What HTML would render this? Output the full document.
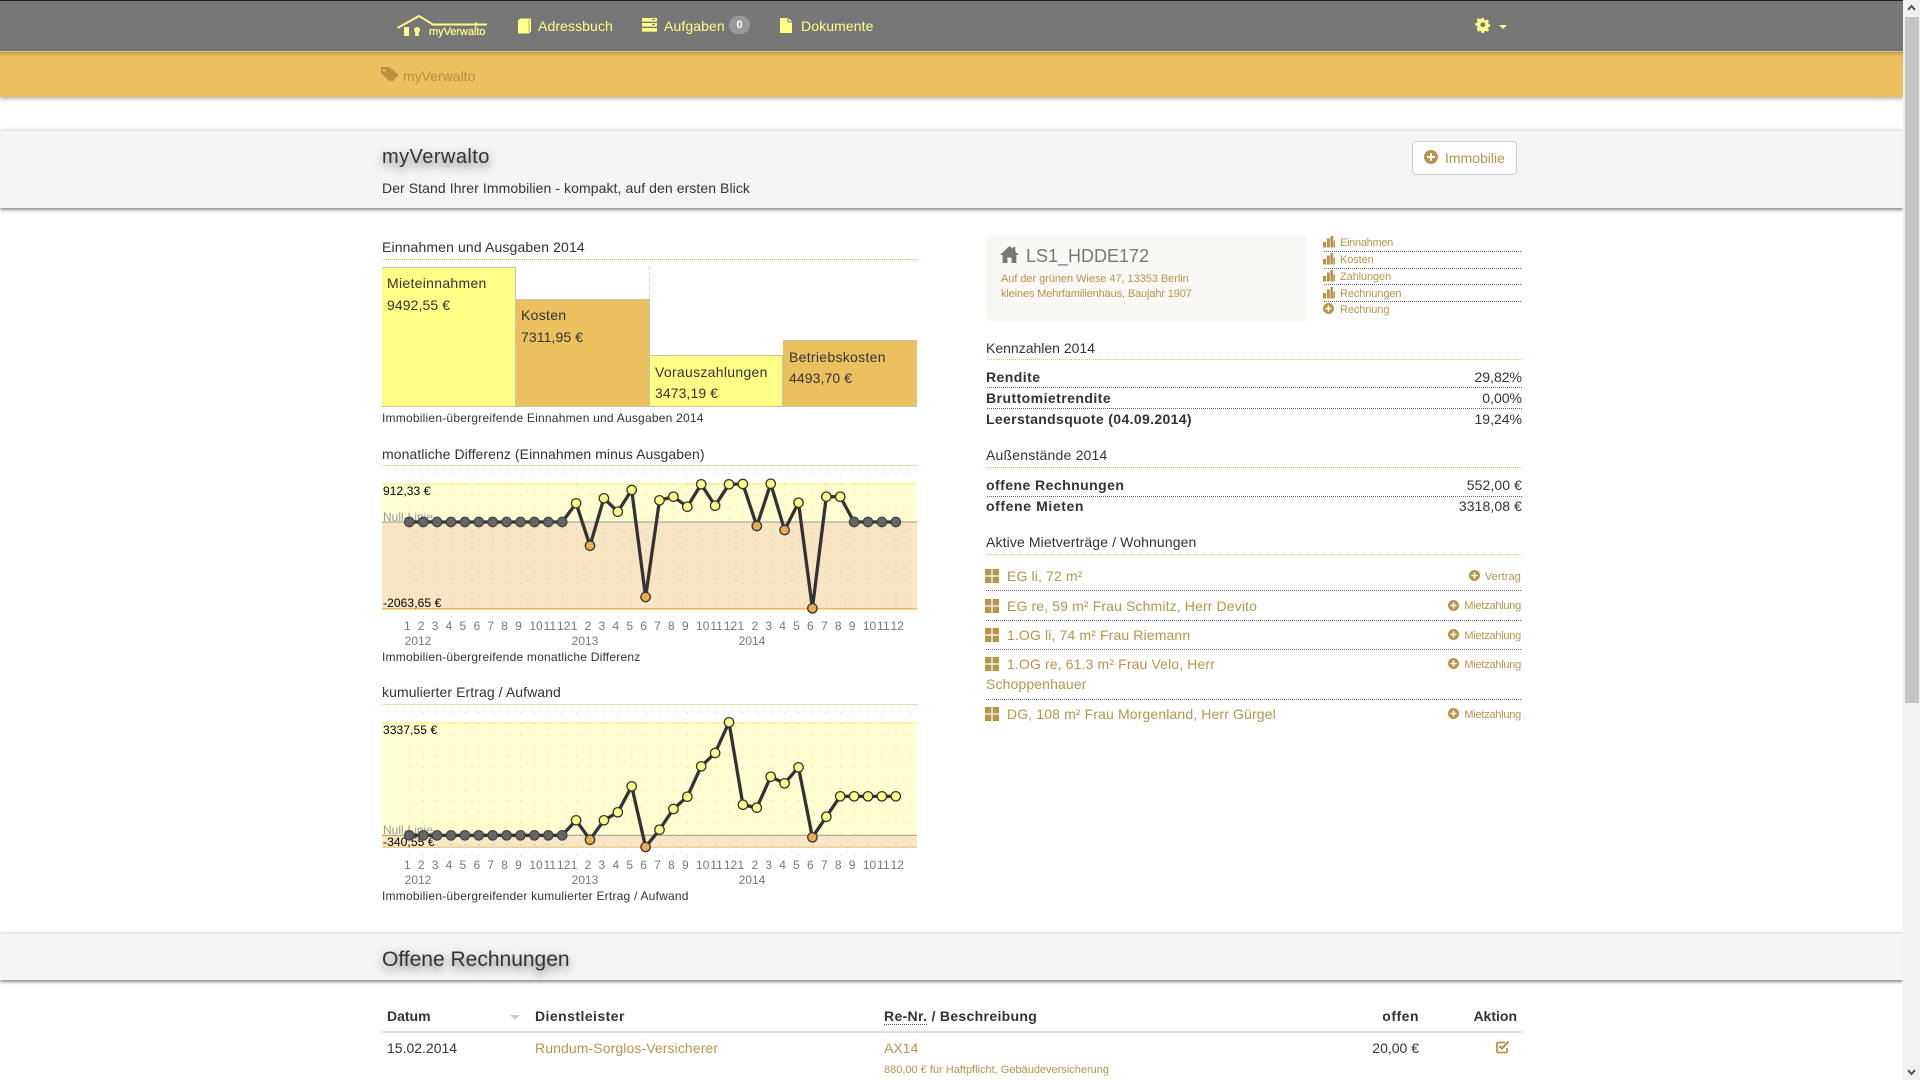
<!DOCTYPE html>
<html lang="de"><head><meta charset="utf-8"><title>myVerwalto</title>
<style>
html,body{margin:0;padding:0;width:1920px;height:1080px;overflow:hidden;background:#fff}
body{position:relative;font-family:"Liberation Sans",Arial,sans-serif;font-size:14px;color:#333}
.a{position:absolute}
.t{position:absolute;line-height:20px;height:20px;white-space:nowrap}
.r{text-align:right}
.b{font-weight:bold}
.bk{font-weight:bold;letter-spacing:.45px}
.h{letter-spacing:.08px}
.bt{letter-spacing:.3px}
.cap{font-size:12px;letter-spacing:.22px}
.rw{letter-spacing:.13px}
.v{letter-spacing:.1px}
.g{color:#b8944a}
.s{font-size:11px}
.lk{letter-spacing:-.1px}
.mz{letter-spacing:-.25px}
.nav{color:#ffff88;letter-spacing:.1px}
.dot{position:absolute;height:0;border-top:1px dotted #666}
.odot{position:absolute;height:0;border-top:1px dotted #ebc05f}
.i{position:absolute;fill:#b8944a}
.bar{position:absolute;box-sizing:border-box;border:1px solid #c4c4b0;border-width:1px 1px 1px 0}
svg text{font-family:"Liberation Sans",Arial,sans-serif;font-size:12px}
.vl text,text.vl{letter-spacing:.1px}
.lb text{fill:#777;text-anchor:middle}
.ch{position:absolute;left:0;top:0}
circle{r:4.7px}
.y{fill:#ffff88;stroke:#333;stroke-width:1.3}
.o{fill:#e5ae54;stroke:#333;stroke-width:1.3}
.n{fill:#666;stroke:#444;stroke-width:1.3}
.l{fill:none;stroke:#333;stroke-width:3.3;stroke-linejoin:round}
</style></head><body>
<svg width="0" height="0" style="position:absolute"><defs>
<symbol id="plus" viewBox="0 0 14 14"><path fill-rule="evenodd" d="M7 0a7 7 0 1 0 0 14A7 7 0 0 0 7 0zM6 3.200h2V6h2.800v2H8v2.800H6V8H3.200V6H6z"/></symbol>
<symbol id="bars" viewBox="0 0 12 12"><path d="M0 6h3v5.500H0zM3.800 2.500h3v9h-3zM7.400 0h2.800v11.500H7.400zM10.600 4.500H12v7h-1.400z"/></symbol>
<symbol id="grid" viewBox="0 0 14 14"><path d="M0 0h6.400v6.400H0zM7.600 0H14v6.400H7.600zM0 7.600h6.400V14H0zM7.600 7.600H14V14H7.600z"/></symbol>
<pattern id="dots" patternUnits="userSpaceOnUse" x="409" y="473" width="13.9" height="11"><rect width="1" height="1.200" fill="#aaa" opacity=".5"/></pattern>
<pattern id="dots2" patternUnits="userSpaceOnUse" x="409" y="712" width="13.9" height="11"><rect width="1" height="1.200" fill="#aaa" opacity=".5"/></pattern>
</defs></svg>

<!-- nav -->
<div class="a" style="left:0;top:0;width:1903px;height:51px;background:#777;border-top:1px solid #222;box-sizing:border-box"></div>
<div class="a" style="left:0;top:51px;width:1903px;height:1px;background:#d8c890"></div>
<svg class="a" style="left:396px;top:13px" width="92" height="26" viewBox="0 0 92 26"><path d="M1.500 15 L23 3 L37 11.500 L91 11.500" fill="none" stroke="#ffff88" stroke-width="1.900"/><path d="M8 14h5v9H8z" fill="#ffff88"/><path d="M21 14a3 3 0 0 1 3 3c0 1-.5 1.600-1.200 2.200V23h-3.600v-3.800c-.7-.6-1.200-1.200-1.200-2.200a3 3 0 0 1 3-3z" fill="#ffff88"/><path d="M80 9v5" stroke="#ffff88" stroke-width="1.200"/></svg>
<div class="t" style="left:429px;top:22px;font-size:11px;letter-spacing:-.05px;color:#ffff88;text-shadow:0 0 .6px #ffff88">myVerwalto</div>
<svg class="a" style="left:517px;top:18px" width="14" height="16" viewBox="0 0 14 16"><path d="M1 2.500 3 .5h11v13l-2 2H1z" fill="#ffff88"/><path d="M12 1.500v13" stroke="#b8b860" stroke-width="1"/></svg>
<div class="t nav" style="left:538px;top:16px">Adressbuch</div>
<svg class="a" style="left:642px;top:18px" width="15" height="14" viewBox="0 0 15 14" fill="#ffff88"><path d="M0 0h15v3.600H0zM0 5h15v3.600H0zM0 10h15v3.600H0z"/><path d="M10 1h3v1h-3zM10 6h3v1h-3z" fill="#777"/></svg>
<div class="t nav" style="left:664px;top:16px">Aufgaben</div>
<div class="a b" style="left:729px;top:16px;width:21px;height:18px;border-radius:9px;background:#999;color:#fff;font-size:11px;line-height:18px;text-align:center">0</div>
<svg class="a" style="left:780px;top:18px" width="12" height="15" viewBox="0 0 12 15"><path d="M0 0h7.500v4.500H12V15H0zM8.500 0 12 3.500H8.500z" fill="#ffff88"/></svg>
<div class="t nav" style="left:801px;top:16px">Dokumente</div>
<svg class="a" style="left:1475px;top:18px" width="15" height="15" viewBox="0 0 14 14"><path fill-rule="evenodd" fill="#ffff88" d="M5.800 0h2.400l.4 2 1.300.6 1.800-1.100 1.700 1.700-1.100 1.800.6 1.300 2 .4v2.400l-2 .4-.6 1.300 1.100 1.800-1.700 1.700-1.800-1.100-1.300.6-.4 2H5.800l-.4-2-1.300-.6-1.800 1.100L.6 11.200l1.100-1.800L1.100 8.100l-2-.4V5.300l2-.4.600-1.300L.6 1.800 2.300.1l1.800 1.100 1.300-.6zM7 4.500a2.500 2.500 0 1 0 0 5 2.500 2.500 0 0 0 0-5z" transform="translate(1 0) scale(.9)"/></svg>
<div class="a" style="left:1499px;top:25px;width:0;height:0;border-left:4px solid transparent;border-right:4px solid transparent;border-top:4px solid #ffff88"></div>

<!-- breadcrumb -->
<div class="a" style="left:0;top:52px;width:1903px;height:45px;background:linear-gradient(to bottom,#b8963f 0,#d9b055 2px,#ebc05f 5px,#ebc05f 100%);box-shadow:0 2px 4px rgba(0,0,0,.3)"></div>
<svg class="a" style="left:381px;top:67px" width="18" height="15" viewBox="0 0 18 15"><path fill-rule="evenodd" fill="#b5913f" d="M0 0h6.500L15 8l-6 6.500L0 6zM3 2a1.300 1.300 0 1 0 0 2.600A1.300 1.300 0 0 0 3 2z"/><path d="M8.500 0 17.500 8l-6 6.500-1.200-1 4.600-5.500L7 0z" fill="#b5913f"/></svg>
<div class="t" style="left:403px;top:66px;color:#b5913f">myVerwalto</div>

<!-- header section -->
<div class="a" style="left:0;top:130px;width:1903px;height:78px;background:#f4f4f4;border-top:1px solid #e4e4e4;box-sizing:border-box;box-shadow:0 -2px 3px rgba(0,0,0,.06),0 2px 3px rgba(0,0,0,.45)"></div>
<div class="t" style="left:382px;top:146px;font-size:20px;letter-spacing:.45px;line-height:22px;height:22px;text-shadow:0 4px 9px rgba(0,0,0,.55)">myVerwalto</div>
<div class="t h" style="left:382px;top:178px">Der Stand Ihrer Immobilien - kompakt, auf den ersten Blick</div>
<div class="a" style="left:1412px;top:141px;width:105px;height:34px;box-sizing:border-box;background:#fff;border:1px solid #ccc;border-radius:4px"></div>
<svg class="i" style="left:1424px;top:150px" width="14" height="14"><use href="#plus"/></svg>
<div class="t g" style="left:1445px;top:148px">Immobilie</div>

<!-- chart 1 -->
<div class="t h" style="left:382px;top:237px;letter-spacing:.13px">Einnahmen und Ausgaben 2014</div>
<div class="odot" style="left:382px;top:259px;width:535px"></div>
<div class="a" style="left:649px;top:267px;height:32px;border-left:1px dotted #ccc"></div>
<div class="bar" style="left:382px;top:267px;width:134px;height:140px;background:#ffff88"></div>
<div class="bar" style="left:516px;top:299px;width:134px;height:108px;background:#ebc05f"></div>
<div class="bar" style="left:650px;top:355px;width:133px;height:52px;background:#ffff88"></div>
<div class="bar" style="left:783px;top:340px;width:134px;height:67px;background:#ebc05f;border-right:0"></div>
<div class="t bt" style="left:387px;top:273px">Mieteinnahmen</div><div class="t v" style="left:387px;top:295px">9492,55 €</div>
<div class="t bt" style="left:521px;top:305px">Kosten</div><div class="t v" style="left:521px;top:327px">7311,95 €</div>
<div class="t bt" style="left:655px;top:362px">Vorauszahlungen</div><div class="t v" style="left:655px;top:383px">3473,19 €</div>
<div class="t bt" style="left:789px;top:347px">Betriebskosten</div><div class="t v" style="left:789px;top:368px">4493,70 €</div>
<div class="t cap" style="left:382px;top:408px">Immobilien-übergreifende Einnahmen und Ausgaben 2014</div>

<!-- chart 2 -->
<div class="t h" style="left:382px;top:444px">monatliche Differenz (Einnahmen minus Ausgaben)</div>
<div class="odot" style="left:382px;top:465px;width:535px"></div>
<svg class="ch" width="1000" height="700" viewBox="0 0 1000 700">
<rect x="382" y="483" width="535" height="39" fill="#ffffd2"/>
<rect x="382" y="522" width="535" height="87" fill="#f7e5c3"/>
<rect x="382" y="483" width="535" height="2" fill="#fff6a6"/>
<rect x="382" y="608" width="535" height="1.500" fill="#f0b94e"/>
<rect x="409" y="473" width="504" height="144" fill="url(#dots)"/>
<rect x="382" y="521.500" width="535" height="1" fill="#999"/>
<text class="vl" x="383" y="495">912,33 €</text>
<text x="383" y="521" fill="#999">Null-Linie</text>
<text class="vl" x="383" y="607">-2063,65 €</text>
<polyline class="l" points="409.300,522 423.200,522 437.100,522 451,522 464.900,522 478.800,522 492.700,522 506.600,522 520.500,522 534.400,522 548.300,522 562.200,522 576.100,503.300 590,545.700 603.900,498.300 617.800,511.700 631.700,490 645.600,597 659.500,500.300 673.400,496.700 687.300,506.700 701.200,484.300 715.100,505.700 729,484.300 742.900,484 756.800,526 770.700,483.700 784.600,530 798.500,502.700 812.400,608.300 826.300,496.700 840.200,496.700 854.100,522 868,522 881.900,522 895.800,522"/>
<g class="n"><circle cx="409.300" cy="522" r="4"/><circle cx="423.200" cy="522" r="4"/><circle cx="437.100" cy="522" r="4"/><circle cx="451" cy="522" r="4"/><circle cx="464.900" cy="522" r="4"/><circle cx="478.800" cy="522" r="4"/><circle cx="492.700" cy="522" r="4"/><circle cx="506.600" cy="522" r="4"/><circle cx="520.500" cy="522" r="4"/><circle cx="534.400" cy="522" r="4"/><circle cx="548.300" cy="522" r="4"/><circle cx="562.200" cy="522" r="4"/><circle cx="854.100" cy="522" r="4"/><circle cx="868" cy="522" r="4"/><circle cx="881.900" cy="522" r="4"/><circle cx="895.800" cy="522" r="4"/></g>
<g class="y"><circle cx="576.100" cy="503.300" r="4"/><circle cx="603.900" cy="498.300" r="4"/><circle cx="617.800" cy="511.700" r="4"/><circle cx="631.700" cy="490" r="4"/><circle cx="659.500" cy="500.300" r="4"/><circle cx="673.400" cy="496.700" r="4"/><circle cx="687.300" cy="506.700" r="4"/><circle cx="701.200" cy="484.300" r="4"/><circle cx="715.100" cy="505.700" r="4"/><circle cx="729" cy="484.300" r="4"/><circle cx="742.900" cy="484" r="4"/><circle cx="770.700" cy="483.700" r="4"/><circle cx="798.500" cy="502.700" r="4"/><circle cx="826.300" cy="496.700" r="4"/><circle cx="840.200" cy="496.700" r="4"/></g>
<g class="o"><circle cx="590" cy="545.700" r="4"/><circle cx="645.600" cy="597" r="4"/><circle cx="756.800" cy="526" r="4"/><circle cx="784.600" cy="530" r="4"/><circle cx="812.400" cy="608.300" r="4"/></g>
<g class="lb" transform="translate(0 630)"><text x="407.300">1</text><text x="421.200">2</text><text x="435.100">3</text><text x="449">4</text><text x="462.900">5</text><text x="476.800">6</text><text x="490.700">7</text><text x="504.600">8</text><text x="518.500">9</text><text x="536">10</text><text x="549.800">11</text><text x="563.700">12</text><text x="574.100">1</text><text x="588">2</text><text x="601.900">3</text><text x="615.800">4</text><text x="629.700">5</text><text x="643.600">6</text><text x="657.500">7</text><text x="671.400">8</text><text x="685.300">9</text><text x="702.700">10</text><text x="716.600">11</text><text x="730.500">12</text><text x="740.900">1</text><text x="754.800">2</text><text x="768.700">3</text><text x="782.600">4</text><text x="796.500">5</text><text x="810.400">6</text><text x="824.300">7</text><text x="838.200">8</text><text x="852.100">9</text><text x="869.500">10</text><text x="883.400">11</text><text x="897.300">12</text><text x="418" y="15">2012</text><text x="585" y="15">2013</text><text x="752" y="15">2014</text></g>
</svg>
<div class="t cap" style="left:382px;top:647px">Immobilien-übergreifende monatliche Differenz</div>

<!-- chart 3 -->
<div class="t h" style="left:382px;top:682px">kumulierter Ertrag / Aufwand</div>
<div class="odot" style="left:382px;top:704px;width:535px"></div>
<svg class="ch" width="1000" height="950" viewBox="0 0 1000 950">
<rect x="382" y="722" width="535" height="113" fill="#ffffd2"/>
<rect x="382" y="835" width="535" height="13" fill="#f7e5c3"/>
<rect x="382" y="722" width="535" height="2" fill="#fff6a6"/>
<rect x="382" y="846.500" width="535" height="1.500" fill="#ebcf94"/>
<rect x="409" y="712" width="504" height="145" fill="url(#dots2)"/>
<rect x="382" y="834.800" width="535" height="1" fill="#999"/>
<text class="vl" x="383" y="734">3337,55 €</text>
<text x="383" y="834" fill="#999">Null-Linie</text>
<text class="vl" x="383" y="846">-340,55 €</text>
<polyline class="l" points="409.300,835.300 423.200,835.300 437.100,835.300 451,835.300 464.900,835.300 478.800,835.300 492.700,835.300 506.600,835.300 520.500,835.300 534.400,835.300 548.300,835.300 562.200,835.300 576.100,820.300 590,839.700 603.900,820.300 617.800,812.300 631.700,786.300 645.600,847 659.500,829.700 673.400,809 687.300,796.700 701.200,766.300 715.100,753 729,722.300 742.900,804.700 756.800,807.700 770.700,776.700 784.600,783.300 798.500,767.300 812.400,837.300 826.300,816.700 840.200,796.300 854.100,796.300 868,796.300 881.900,796.300 895.800,796.300"/>
<g class="n"><circle cx="409.300" cy="835.300" r="4"/><circle cx="423.200" cy="835.300" r="4"/><circle cx="437.100" cy="835.300" r="4"/><circle cx="451" cy="835.300" r="4"/><circle cx="464.900" cy="835.300" r="4"/><circle cx="478.800" cy="835.300" r="4"/><circle cx="492.700" cy="835.300" r="4"/><circle cx="506.600" cy="835.300" r="4"/><circle cx="520.500" cy="835.300" r="4"/><circle cx="534.400" cy="835.300" r="4"/><circle cx="548.300" cy="835.300" r="4"/><circle cx="562.200" cy="835.300" r="4"/></g>
<g class="y"><circle cx="576.100" cy="820.300" r="4"/><circle cx="603.900" cy="820.300" r="4"/><circle cx="617.800" cy="812.300" r="4"/><circle cx="631.700" cy="786.300" r="4"/><circle cx="659.500" cy="829.700" r="4"/><circle cx="673.400" cy="809" r="4"/><circle cx="687.300" cy="796.700" r="4"/><circle cx="701.200" cy="766.300" r="4"/><circle cx="715.100" cy="753" r="4"/><circle cx="729" cy="722.300" r="4"/><circle cx="742.900" cy="804.700" r="4"/><circle cx="756.800" cy="807.700" r="4"/><circle cx="770.700" cy="776.700" r="4"/><circle cx="784.600" cy="783.300" r="4"/><circle cx="798.500" cy="767.300" r="4"/><circle cx="826.300" cy="816.700" r="4"/><circle cx="840.200" cy="796.300" r="4"/><circle cx="854.100" cy="796.300" r="4"/><circle cx="868" cy="796.300" r="4"/><circle cx="881.900" cy="796.300" r="4"/><circle cx="895.800" cy="796.300" r="4"/></g>
<g class="o"><circle cx="590" cy="839.700" r="4"/><circle cx="645.600" cy="847" r="4"/><circle cx="812.400" cy="837.300" r="4"/></g>
<g class="lb" transform="translate(0 869)"><text x="407.300">1</text><text x="421.200">2</text><text x="435.100">3</text><text x="449">4</text><text x="462.900">5</text><text x="476.800">6</text><text x="490.700">7</text><text x="504.600">8</text><text x="518.500">9</text><text x="536">10</text><text x="549.800">11</text><text x="563.700">12</text><text x="574.100">1</text><text x="588">2</text><text x="601.900">3</text><text x="615.800">4</text><text x="629.700">5</text><text x="643.600">6</text><text x="657.500">7</text><text x="671.400">8</text><text x="685.300">9</text><text x="702.700">10</text><text x="716.600">11</text><text x="730.500">12</text><text x="740.900">1</text><text x="754.800">2</text><text x="768.700">3</text><text x="782.600">4</text><text x="796.500">5</text><text x="810.400">6</text><text x="824.300">7</text><text x="838.200">8</text><text x="852.100">9</text><text x="869.500">10</text><text x="883.400">11</text><text x="897.300">12</text><text x="418" y="15">2012</text><text x="585" y="15">2013</text><text x="752" y="15">2014</text></g>
</svg>
<div class="t cap" style="left:382px;top:886px">Immobilien-übergreifender kumulierter Ertrag / Aufwand</div>

<!-- right column -->
<div class="a" style="left:986px;top:235px;width:321px;height:87px;background:#f9f8f5;border-radius:4px"></div>
<svg class="a" style="left:1000px;top:245px" width="19" height="19" viewBox="0 0 18 18"><path d="M9 1 0 9.500h2.500V17h4.500v-5h4v5h4.500V9.500H18L14.500 6.200V2h-2.500v1.800z" fill="#777"/></svg>
<div class="t" style="left:1026px;top:246px;font-size:18px;color:#777">LS1_HDDE172</div>
<div class="t g s" style="left:1001px;top:269px;letter-spacing:-.05px">Auf der grünen Wiese 47, 13353 Berlin</div>
<div class="t g s" style="left:1001px;top:284px;letter-spacing:-.13px">kleines Mehrfamilienhaus, Baujahr 1907</div>

<svg class="i" style="left:1323px;top:236px" width="12" height="12"><use href="#bars"/></svg><div class="t g s lk" style="left:1340px;top:233px;letter-spacing:-.3px">Einnahmen</div>
<div class="dot" style="left:1324px;top:251px;width:197px"></div>
<svg class="i" style="left:1323px;top:253px" width="12" height="12"><use href="#bars"/></svg><div class="t g s lk" style="left:1340px;top:250px">Kosten</div>
<div class="dot" style="left:1324px;top:268px;width:197px"></div>
<svg class="i" style="left:1323px;top:270px" width="12" height="12"><use href="#bars"/></svg><div class="t g s lk" style="left:1340px;top:267px">Zahlungen</div>
<div class="dot" style="left:1324px;top:284px;width:197px"></div>
<svg class="i" style="left:1323px;top:287px" width="12" height="12"><use href="#bars"/></svg><div class="t g s lk" style="left:1340px;top:284px">Rechnungen</div>
<div class="dot" style="left:1324px;top:301px;width:197px"></div>
<svg class="i" style="left:1323px;top:303px" width="11" height="11"><use href="#plus"/></svg><div class="t g s lk" style="left:1340px;top:300px">Rechnung</div>

<div class="t" style="left:986px;top:338px">Kennzahlen 2014</div>
<div class="odot" style="left:987px;top:359px;width:535px"></div>
<div class="t bk" style="left:986px;top:367px">Rendite</div><div class="t r" style="left:1322px;width:200px;top:367px">29,82%</div>
<div class="dot" style="left:987px;top:387px;width:535px"></div>
<div class="t bk" style="left:986px;top:388px">Bruttomietrendite</div><div class="t r" style="left:1322px;width:200px;top:388px">0,00%</div>
<div class="dot" style="left:987px;top:408px;width:535px"></div>
<div class="t bk" style="left:986px;top:409px;letter-spacing:.35px">Leerstandsquote (04.09.2014)</div><div class="t r" style="left:1322px;width:200px;top:409px">19,24%</div>

<div class="t h" style="left:986px;top:445px;letter-spacing:.2px">Außenstände 2014</div>
<div class="odot" style="left:987px;top:467px;width:535px"></div>
<div class="t bk" style="left:986px;top:475px">offene Rechnungen</div><div class="t r v" style="left:1322px;width:200px;top:475px">552,00 €</div>
<div class="dot" style="left:987px;top:496px;width:535px"></div>
<div class="t bk" style="left:986px;top:496px;letter-spacing:.6px">offene Mieten</div><div class="t r v" style="left:1322px;width:200px;top:496px">3318,08 €</div>

<div class="t h" style="left:986px;top:532px;letter-spacing:.12px">Aktive Mietverträge / Wohnungen</div>
<div class="odot" style="left:987px;top:554px;width:535px"></div>

<svg class="i" style="left:985px;top:569px" width="14" height="14"><use href="#grid"/></svg>
<div class="t g rw" style="left:1007px;top:566px">EG li, 72 m²</div>
<svg class="i" style="left:1469px;top:570px" width="11" height="11"><use href="#plus"/></svg><div class="t g s r" style="left:1421px;width:100px;top:567px;letter-spacing:.1px">Vertrag</div>
<div class="dot" style="left:986px;top:590px;width:535px"></div>

<svg class="i" style="left:985px;top:599px" width="14" height="14"><use href="#grid"/></svg>
<div class="t g rw" style="left:1007px;top:596px">EG re, 59 m² Frau Schmitz, Herr Devito</div>
<svg class="i" style="left:1448px;top:600px" width="11" height="11"><use href="#plus"/></svg><div class="t g s r mz" style="left:1421px;width:100px;top:596px">Mietzahlung</div>
<div class="dot" style="left:986px;top:620px;width:535px"></div>

<svg class="i" style="left:985px;top:628px" width="14" height="14"><use href="#grid"/></svg>
<div class="t g rw" style="left:1007px;top:625px">1.OG li, 74 m² Frau Riemann</div>
<svg class="i" style="left:1448px;top:629px" width="11" height="11"><use href="#plus"/></svg><div class="t g s r mz" style="left:1421px;width:100px;top:626px">Mietzahlung</div>
<div class="dot" style="left:986px;top:649px;width:535px"></div>

<svg class="i" style="left:985px;top:657px" width="14" height="14"><use href="#grid"/></svg>
<div class="t g rw" style="left:1007px;top:654px">1.OG re, 61.3 m² Frau Velo, Herr</div>
<div class="t g rw" style="left:986px;top:674px">Schoppenhauer</div>
<svg class="i" style="left:1448px;top:658px" width="11" height="11"><use href="#plus"/></svg><div class="t g s r mz" style="left:1421px;width:100px;top:655px">Mietzahlung</div>
<div class="dot" style="left:986px;top:699px;width:535px"></div>

<svg class="i" style="left:985px;top:707px" width="14" height="14"><use href="#grid"/></svg>
<div class="t g rw" style="left:1007px;top:704px">DG, 108 m² Frau Morgenland, Herr Gürgel</div>
<svg class="i" style="left:1448px;top:708px" width="11" height="11"><use href="#plus"/></svg><div class="t g s r mz" style="left:1421px;width:100px;top:705px">Mietzahlung</div>

<!-- offene rechnungen -->
<div class="a" style="left:0;top:933px;width:1903px;height:47px;background:#f4f4f4;border-top:1px solid #e4e4e4;box-sizing:border-box;box-shadow:0 -2px 3px rgba(0,0,0,.06),0 2px 3px rgba(0,0,0,.45)"></div>
<div class="t" style="left:382px;top:948px;font-size:21px;line-height:24px;height:24px;text-shadow:0 4px 9px rgba(0,0,0,.55)">Offene Rechnungen</div>
<div class="t b" style="left:387px;top:1006px">Datum</div>
<div class="a" style="left:510px;top:1015px;width:0;height:0;border-left:5px solid transparent;border-right:5px solid transparent;border-top:5px solid #ccc"></div>
<div class="t bk" style="left:535px;top:1006px">Dienstleister</div>
<div class="t b" style="left:884px;top:1006px;letter-spacing:.33px"><span style="border-bottom:1px dotted #555">Re-Nr.</span> / Beschreibung</div>
<div class="t b r" style="left:1319px;width:100px;top:1006px;letter-spacing:.5px">offen</div>
<div class="t b r" style="left:1417px;width:100px;top:1006px">Aktion</div>
<div class="a" style="left:382px;top:1031px;width:1140px;height:2px;background:#ddd"></div>
<div class="t" style="left:387px;top:1038px">15.02.2014</div>
<div class="t g v" style="left:535px;top:1038px">Rundum-Sorglos-Versicherer</div>
<div class="t g" style="left:884px;top:1038px">AX14</div>
<div class="t g" style="left:884px;top:1059px;font-size:11px;top:1060px">880,00 € für Haftpflicht, Gebäudeversicherung</div>
<div class="t r" style="left:1319px;width:100px;top:1038px">20,00 €</div>
<svg class="a" style="left:1496px;top:1040px" width="14" height="14" viewBox="0 0 14 14"><path d="M11 8v3.500a1 1 0 0 1-1 1H2a1 1 0 0 1-1-1v-8a1 1 0 0 1 1-1h7" fill="none" stroke="#b8944a" stroke-width="1.800"/><path d="M3.500 6 6 8.500 12.500 1.500" fill="none" stroke="#b8944a" stroke-width="2.200"/></svg>

<!-- scrollbar -->
<div class="a" style="left:1903px;top:0;width:17px;height:1080px;background:#f1f1f1"></div>
<div class="a" style="left:1905px;top:17px;width:14px;height:686px;background:#c4c4c4"></div>
<svg class="a" style="left:1903px;top:0" width="17" height="17"><path d="M5 10l3.500-4 3.500 4" fill="none" stroke="#505050" stroke-width="2"/></svg>
<svg class="a" style="left:1903px;top:1063px" width="17" height="17"><path d="M5 7l3.500 4 3.500-4" fill="none" stroke="#505050" stroke-width="2"/></svg>
</body></html>
